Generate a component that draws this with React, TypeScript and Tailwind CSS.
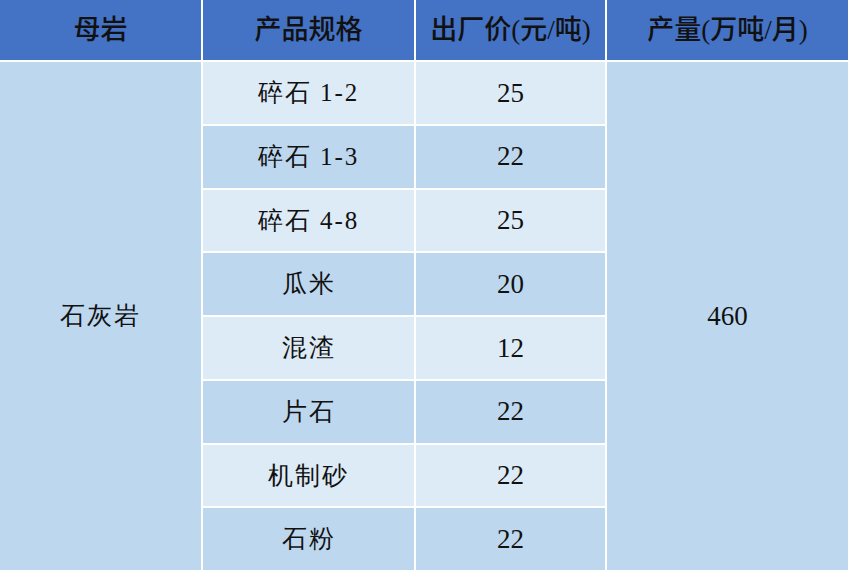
import React from "react";

const rows = [
  { spec: "碎石 1-2", price: "25" },
  { spec: "碎石 1-3", price: "22" },
  { spec: "碎石 4-8", price: "25" },
  { spec: "瓜米", price: "20" },
  { spec: "混渣", price: "12" },
  { spec: "片石", price: "22" },
  { spec: "机制砂", price: "22" },
  { spec: "石粉", price: "22" },
];

export default function App() {
  return (
    <div className="w-[848px] h-[570px] bg-white overflow-hidden font-[family-name:'Liberation_Serif',ui-serif,Georgia,Cambria,serif]">
      <div className="grid h-full grid-cols-[201px_211px_189px_1fr] grid-rows-[60px_repeat(8,1fr)] gap-[2px] text-[#111]">
        {["母岩", "产品规格", "出厂价(元/吨)", "产量(万吨/月)"].map((h) => (
          <div
            key={h}
            className="bg-[#4472c4] flex items-center justify-center text-[27px] font-medium font-[family-name:'Liberation_Serif','Noto_Sans_CJK_SC',sans-serif]"
          >
            {h}
          </div>
        ))}

        {/* merged parent rock cell */}
        <div className="row-span-8 col-start-1 row-start-2 bg-[#bdd7ee] flex items-center justify-center text-[25px] tracking-[2px]">
          石灰岩
        </div>

        {rows.map((r, i) => {
          const bg = i % 2 === 0 ? "bg-[#ddebf7]" : "bg-[#bdd7ee]";
          return (
            <React.Fragment key={i}>
              <div className={`${bg} col-start-2 flex items-center justify-center text-[25px] tracking-[2px]`}>
                {r.spec}
              </div>
              <div className={`${bg} col-start-3 flex items-center justify-center text-[27px]`}>
                {r.price}
              </div>
            </React.Fragment>
          );
        })}

        {/* merged output cell */}
        <div className="row-span-8 col-start-4 row-start-2 bg-[#bdd7ee] flex items-center justify-center text-[27px]">
          460
        </div>
      </div>
    </div>
  );
}
